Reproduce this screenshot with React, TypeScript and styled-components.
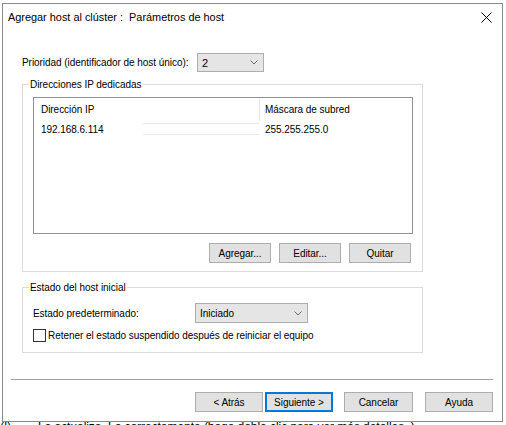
import React from "react";
import styled, { createGlobalStyle } from "styled-components";

const Global = createGlobalStyle`
  html, body { margin: 0; padding: 0; background: #ffffff; overflow: hidden; }
  body { font-family: "Liberation Sans", Arial, sans-serif; font-size: 10px; letter-spacing: -0.05px; color: #000; }
  * { box-sizing: border-box; }
`;

const Screen = styled.div`
  width: 506px;
  height: 425px;
  overflow: hidden;
  display: flex;
  flex-direction: column;
`;

const Dialog = styled.div`
  margin: 3px 0 0 2px;
  width: 501px;
  height: 419px;
  border: 1px solid #8a8a8a;
  background: #ffffff;
  display: flex;
  flex-direction: column;
  flex-shrink: 0;
`;

const TitleBar = styled.div`
  height: 28px;
  display: flex;
  align-items: center;
  padding: 0 10px 2px 5px;
`;

const Title = styled.span`
  font-family: "Liberation Sans", Arial, sans-serif;
  font-size: 10.9px;
  letter-spacing: 0;
  white-space: pre;
`;

const CloseButton = styled.span`
  margin-left: auto;
  display: flex;
  width: 11px;
  height: 11px;
`;

const Body = styled.div`
  padding-left: 19px;
  display: flex;
  flex-direction: column;
`;

const Row = styled.div<{ $mt?: number; $h: number }>`
  display: flex;
  align-items: center;
  height: ${(p) => p.$h}px;
  margin-top: ${(p) => p.$mt ?? 0}px;
`;

const Label = styled.span<{ $w: number }>`
  width: ${(p) => p.$w}px;
  white-space: nowrap;
  flex-shrink: 0;
`;

const Select = styled.div<{ $w: number; $h: number }>`
  width: ${(p) => p.$w}px;
  height: ${(p) => p.$h}px;
  border: 1px solid #adadad;
  background: #e5e5e5;
  display: flex;
  align-items: center;
  padding: 0 5px 0 4px;
`;

const SelectValue = styled.span<{ $size?: number }>`
  flex: 1;
  font-size: ${(p) => p.$size ?? 10}px;
`;

const Chevron = () => (
  <svg width="8" height="5" viewBox="0 0 8 5">
    <path d="M0.5 0.5 L4 4 L7.5 0.5" fill="none" stroke="#6a6a6a" strokeWidth="1" />
  </svg>
);

const Group = styled.div<{ $mt: number; $h: number; $pt: number }>`
  position: relative;
  width: 401px;
  height: ${(p) => p.$h}px;
  margin-top: ${(p) => p.$mt}px;
  border: 1px solid #dcdcdc;
  padding: ${(p) => p.$pt}px 9px 0 10px;
  display: flex;
  flex-direction: column;
`;

const Legend = styled.span`
  position: absolute;
  top: -7px;
  left: 6px;
  padding: 0 1px;
  background: #ffffff;
  line-height: 13px;
  white-space: nowrap;
`;

const ListView = styled.div`
  width: 380px;
  height: 137px;
  border: 1px solid #8f909a;
  display: flex;
  flex-direction: column;
`;

const ListHeader = styled.div`
  display: flex;
  height: 23px;
`;

const HeaderCell = styled.div<{ $w?: number; $pl: number; $divider?: boolean }>`
  display: flex;
  align-items: center;
  width: ${(p) => (p.$w ? `${p.$w}px` : "auto")};
  flex: ${(p) => (p.$w ? "none" : "1")};
  padding-left: ${(p) => p.$pl}px;
  border-right: ${(p) => (p.$divider ? "1px solid #e8e8e8" : "none")};
  white-space: nowrap;
`;

const ListRow = styled.div`
  display: flex;
  height: 16px;
`;

const Cell = styled.div<{ $w?: number; $pl: number }>`
  display: flex;
  align-items: center;
  width: ${(p) => (p.$w ? `${p.$w}px` : "auto")};
  flex: ${(p) => (p.$w ? "none" : "1")};
  padding-left: ${(p) => p.$pl}px;
  white-space: nowrap;
`;

const Blur = styled.span`
  margin-left: auto;
  width: 116px;
  height: 12px;
  border-top: 1px solid #e8e8e8;
  border-bottom: 1px solid #ececec;
`;

const ButtonRow = styled.div<{ $mt: number; $pr: number }>`
  display: flex;
  justify-content: flex-end;
  margin-top: ${(p) => p.$mt}px;
  padding-right: ${(p) => p.$pr}px;
`;

const Button = styled.div<{ $w: number; $ml?: number; $default?: boolean }>`
  width: ${(p) => p.$w}px;
  height: 20px;
  margin-left: ${(p) => p.$ml ?? 0}px;
  border: ${(p) => (p.$default ? "2px solid #0078d7" : "1px solid #adadad")};
  background: #e1e1e1;
  display: flex;
  align-items: center;
  justify-content: center;
  white-space: nowrap;
  flex-shrink: 0;
`;

const Checkbox = styled.span`
  width: 13px;
  height: 13px;
  border: 1px solid #333333;
  background: #ffffff;
  margin-right: 2px;
  flex-shrink: 0;
`;

const Separator = styled.div`
  margin: 26px 9px 0 8px;
  height: 2px;
  border-top: 1px solid #a0a0a0;
  border-bottom: 1px solid #ffffff;
`;

const StatusLine = styled.div`
  margin-top: -2px;
  display: flex;
  font-size: 12px;
  line-height: 14px;
  white-space: nowrap;
`;

const StatusIcon = styled.span`
  width: 38px;
`;

export default function App() {
  return (
    <Screen>
      <Global />
      <Dialog>
        <TitleBar>
          <Title>Agregar host al clúster :  Parámetros de host</Title>
          <CloseButton>
            <svg width="11" height="11" viewBox="0 0 11 11">
              <path d="M0.5 0.5 L10.5 10.5 M10.5 0.5 L0.5 10.5" stroke="#000" strokeWidth="1" />
            </svg>
          </CloseButton>
        </TitleBar>
        <Body>
          <Row $mt={21} $h={19}>
            <Label $w={175}>Prioridad (identificador de host único):</Label>
            <Select $w={67} $h={19}>
              <SelectValue $size={11}>2</SelectValue>
              <Chevron />
            </Select>
          </Row>
          <Group $mt={12} $h={188} $pt={12}>
            <Legend>Direcciones IP dedicadas</Legend>
            <ListView>
              <ListHeader>
                <HeaderCell $w={226} $pl={7} $divider>Dirección IP</HeaderCell>
                <HeaderCell $pl={5}>Máscara de subred</HeaderCell>
              </ListHeader>
              <ListRow>
                <Cell $w={225} $pl={7}>
                  192.168.6.114
                  <Blur />
                </Cell>
                <Cell $pl={6}>255.255.255.0</Cell>
              </ListRow>
            </ListView>
            <ButtonRow $mt={9} $pr={2}>
              <Button $w={62}>Agregar...</Button>
              <Button $w={62} $ml={8}>Editar...</Button>
              <Button $w={62} $ml={8}>Quitar</Button>
            </ButtonRow>
          </Group>
          <Group $mt={15} $h={66} $pt={15}>
            <Legend>Estado del host inicial</Legend>
            <Row $h={20}>
              <Label $w={162}>Estado predeterminado:</Label>
              <Select $w={113} $h={20}>
                <SelectValue>Iniciado</SelectValue>
                <Chevron />
              </Select>
            </Row>
            <Row $mt={5} $h={15}>
              <Checkbox />
              <span>Retener el estado suspendido después de reiniciar el equipo</span>
            </Row>
          </Group>
        </Body>
        <Separator />
        <ButtonRow $mt={11} $pr={9}>
          <Button $w={68}>&lt; Atrás</Button>
          <Button $w={68} $ml={2} $default>Siguiente &gt;</Button>
          <Button $w={69} $ml={11}>Cancelar</Button>
          <Button $w={68} $ml={12}>Ayuda</Button>
        </ButtonRow>
      </Dialog>
      <StatusLine>
        <StatusIcon>(!)</StatusIcon>
        <span>Lo actualiza. Lo correctamente (haga doble clic para ver más detalles. )</span>
      </StatusLine>
    </Screen>
  );
}
